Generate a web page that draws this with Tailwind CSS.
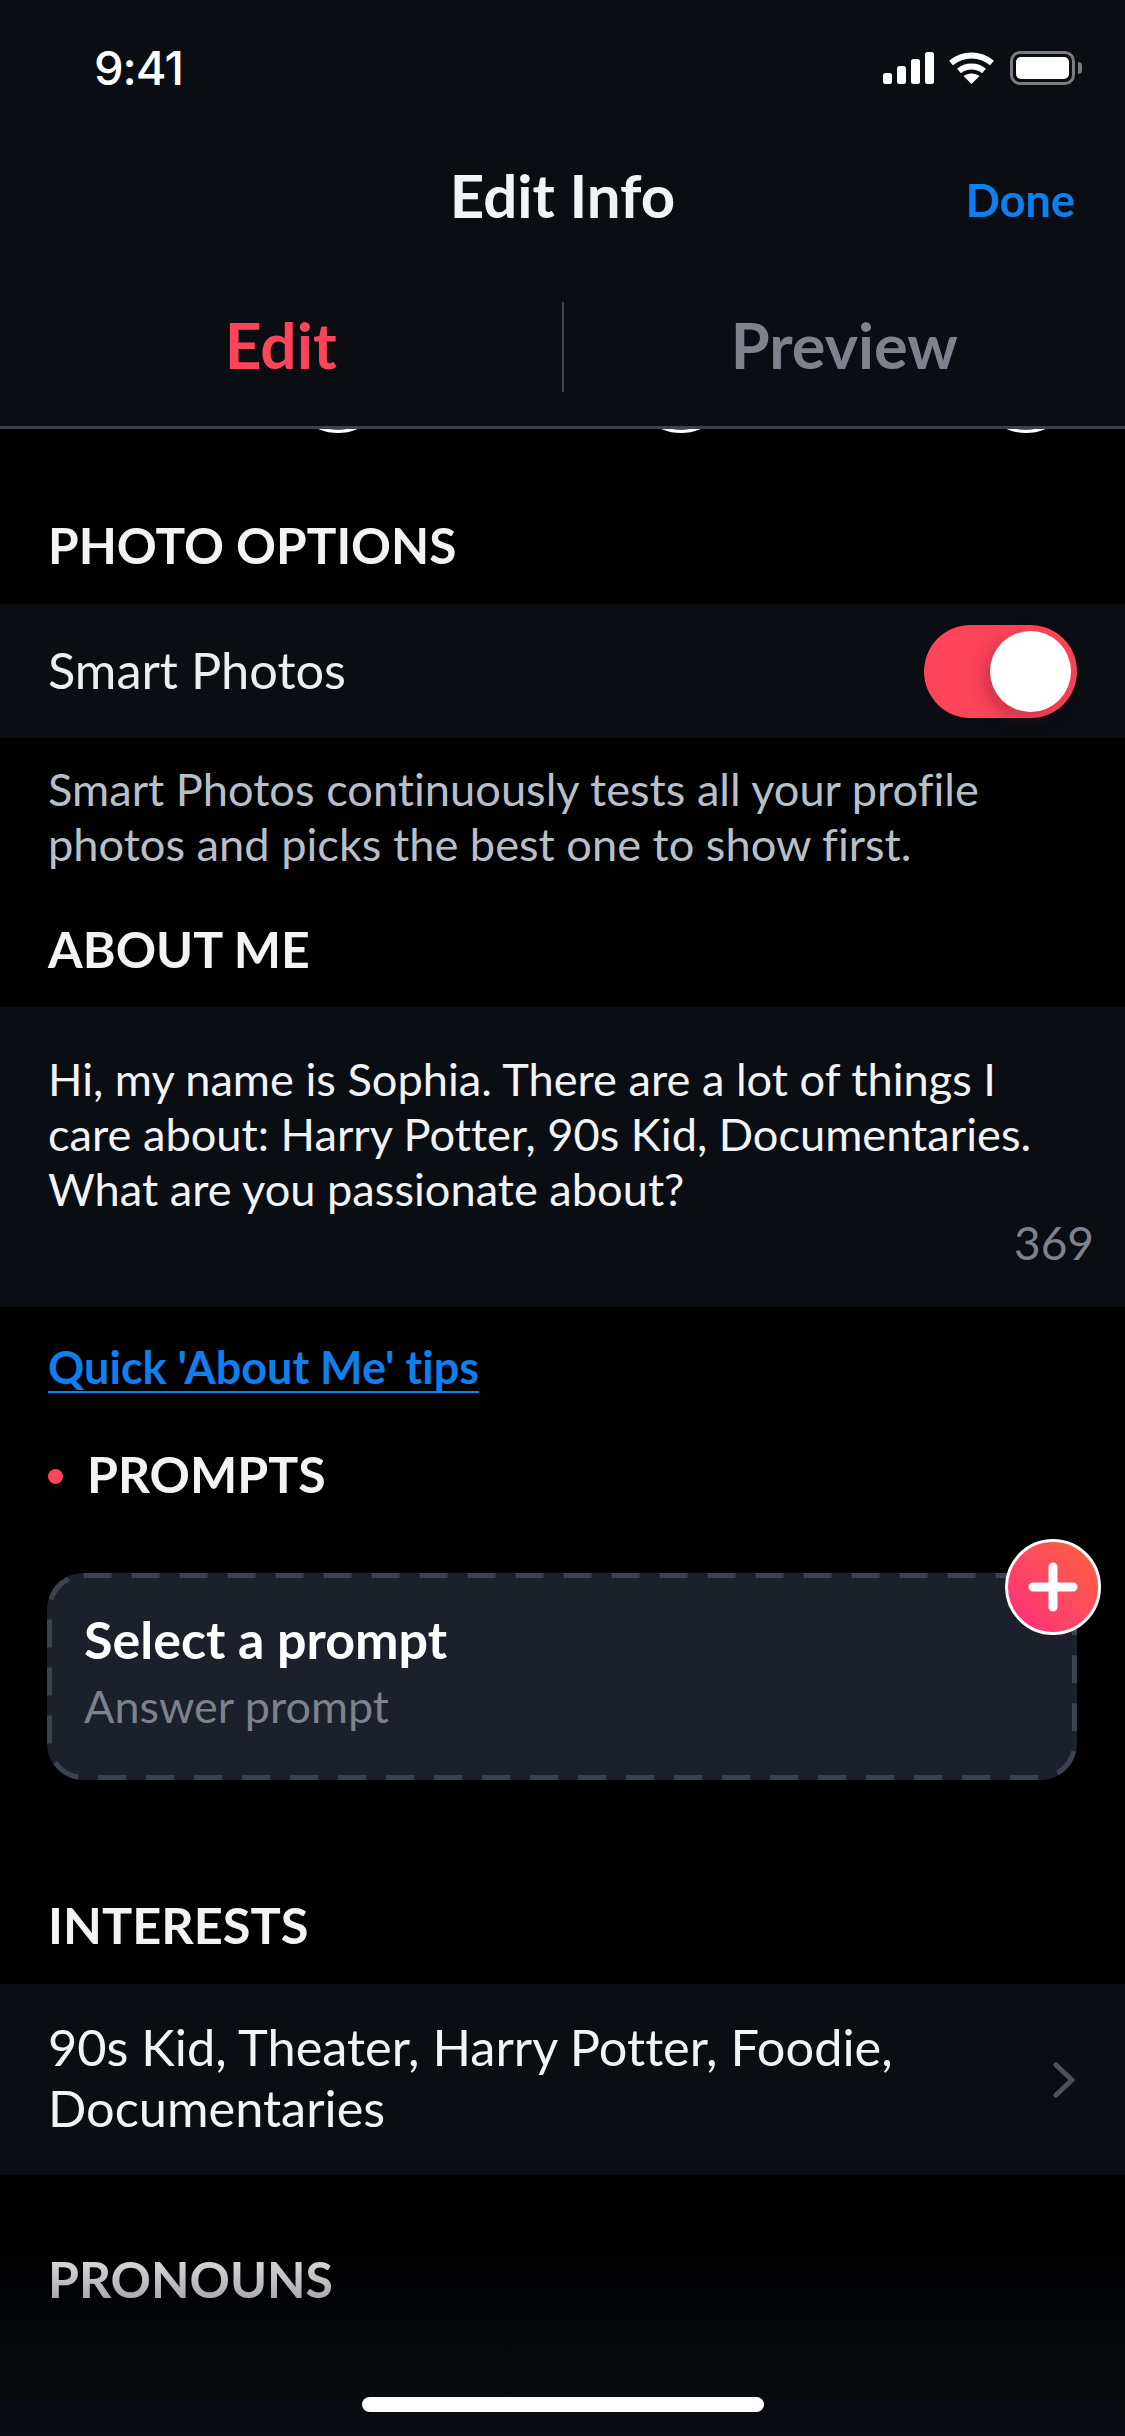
<!DOCTYPE html>
<html lang="en">
<head>
    <meta charset="UTF-8">
    <title>Edit Info</title>
    <meta name="viewport" content="width=device-width, initial-scale=1.0">
    <script src="https://cdn.jsdelivr.net/npm/@tailwindcss/browser@4"></script>
</head>
<body class="relative w-[1125px] h-[2436px] overflow-hidden bg-black text-white font-['Lato','Noto_Sans',sans-serif] [font-variant-ligatures:none]">
    <!-- peeking photo buttons behind the header -->
    <div class="absolute left-[290px] top-[337px] w-[96px] h-[96px] rounded-full border-[3px] border-white bg-[#c2255c]"></div>
    <div class="absolute left-[633px] top-[337px] w-[96px] h-[96px] rounded-full border-[3px] border-white bg-[#c2255c]"></div>
    <div class="absolute left-[978px] top-[337px] w-[96px] h-[96px] rounded-full border-[3px] border-white bg-[#c2255c]"></div>

    <header class="relative h-[429px] bg-[#0a0d12] border-b-[3px] border-[#3c424c]">
        <div class="flex items-center justify-between h-[136px] pl-[94px] pr-[43px]">
            <span class="text-[47px] font-['Inter',sans-serif] font-medium tracking-[-1px]">9:41</span>
            <div class="flex items-center">
                <svg width="51" height="32" viewBox="0 0 51 32" fill="#fff" class="mr-[15px]">
                    <rect x="0" y="21" width="9" height="11" rx="2.5"/>
                    <rect x="14" y="14" width="9" height="18" rx="2.5"/>
                    <rect x="28" y="7" width="9" height="25" rx="2.5"/>
                    <rect x="42" y="0" width="9" height="32" rx="2.5"/>
                </svg>
                <svg width="45" height="32" viewBox="0 0 45 32" fill="none" stroke="#fff" stroke-width="6" class="mr-[16px]">
                    <path d="M2 11 C14 1 31 1 43 11"/>
                    <path d="M10 19 C17 13 28 13 35 19"/>
                    <path d="M22.5 32 L14.5 24 C19 20.5 26 20.5 30.5 24 Z" fill="#fff" stroke="none"/>
                </svg>
                <div class="w-[65px] h-[34px] rounded-[10px] border-[3px] border-[#7a7c80] p-[3px]">
                    <div class="w-full h-full rounded-[5px] bg-white"></div>
                </div>
                <div class="w-[4px] h-[12px] ml-[3px] rounded-r-full bg-[#7a7c80]"></div>
            </div>
        </div>
        <div class="relative flex items-center justify-center h-[122px] pb-[4px]">
            <span class="text-[60px] font-bold text-[#f2f3f5]">Edit Info</span>
            <span class="absolute right-[50px] top-[31px] text-[45px] font-bold text-[#107fee]">Done</span>
        </div>
        <div class="flex items-center h-[90px] mt-[44px]">
            <div class="flex-1 pb-[4px] text-center text-[64px] font-bold text-[#fd4459]">Edit</div>
            <div class="w-[2px] h-[90px] bg-[#3c424c]"></div>
            <div class="flex-1 pb-[4px] text-center text-[63px] font-bold text-[#7d828c]">Preview</div>
        </div>
    </header>

    <main>
        <h2 class="flex items-center h-[114px] mt-[61px] pb-[3px] px-[48px] text-[49.5px] font-bold text-[#f2f3f5]">PHOTO OPTIONS</h2>
        <div class="flex items-center justify-between h-[134px] px-[48px] bg-[#0a0d12]">
            <span class="pb-[3px] text-[50.5px] text-[#eceef0]">Smart Photos</span>
            <div class="relative w-[153px] h-[93px] rounded-full bg-[#fd4459]">
                <div class="absolute right-[6px] top-[6px] w-[81px] h-[81px] rounded-full bg-white shadow-[-6px_6px_16px_rgba(120,20,40,0.35)]"></div>
            </div>
        </div>
        <p class="pt-[23px] px-[48px] text-[45.2px] leading-[55px] text-[#b9bfc8]">Smart Photos continuously tests all your profile<br>photos and picks the best one to show first.</p>
        <h2 class="flex items-center h-[111px] mt-[25px] pb-[4px] px-[48px] text-[50px] font-bold text-[#f2f3f5]">ABOUT ME</h2>
        <div class="h-[300px] pt-[44px] bg-[#0a0d12]">
            <p class="px-[48px] text-[45.2px] leading-[55px] text-[#f2f3f5]">Hi, my name is Sophia. There are a lot of things I<br>care about: Harry Potter, 90s Kid, Documentaries.<br>What are you passionate about?</p>
            <div class="pr-[31px] text-right text-[46px] leading-[54px] text-[#7d828c]">369</div>
        </div>
        <a class="block mt-[33px] px-[48px] text-[45px] leading-[54px] font-bold text-[#107fee] underline decoration-[2px] underline-offset-[7px] [text-decoration-skip-ink:none]">Quick 'About Me' tips</a>
        <div class="flex items-center gap-[24px] h-[54px] mt-[55px] pl-[48px]">
            <span class="w-[15px] h-[15px] rounded-full bg-[#fd4459]"></span>
            <h2 class="pb-[4px] text-[50px] font-bold text-[#f2f3f5]">PROMPTS</h2>
        </div>
        <div class="relative h-[207px] mt-[70px] mx-[47px] w-[1030px] rounded-[36px] bg-[#1b202a] pl-[37px] pt-[37px]">
            <svg class="absolute left-0 top-0" width="1030" height="207" fill="none">
                <rect x="2.5" y="2.5" width="1025" height="202" rx="34" stroke="#3c424f" stroke-width="5" stroke-dasharray="28 20"/>
            </svg>
            <div class="relative text-[52px] leading-[58px] font-bold">Select a prompt</div>
            <div class="relative mt-[10px] text-[45px] leading-[56px] text-[#7d828c]">Answer prompt</div>
            <div class="absolute right-[-24px] top-[-34px] flex items-center justify-center w-[96px] h-[96px] rounded-full border-[3px] border-white bg-gradient-to-tr from-[#fd267d] to-[#ff6036]">
                <svg width="50" height="50" viewBox="0 0 50 50" stroke="#fff" stroke-width="9" stroke-linecap="round">
                    <path d="M25 5 V45 M5 25 H45"/>
                </svg>
            </div>
        </div>
        <h2 class="flex items-center h-[114px] mt-[90px] pb-[4px] px-[48px] text-[50.5px] font-bold text-[#f2f3f5]">INTERESTS</h2>
        <div class="flex items-center justify-between h-[191px] pl-[48px] pr-[50px] bg-[#0a0d12]">
            <p class="pb-[5px] text-[50.5px] leading-[61px] text-[#f2f3f5]">90s Kid, Theater, Harry Potter, Foodie,<br>Documentaries</p>
            <svg width="22" height="36" viewBox="0 0 22 36" fill="none" stroke="#4e525b" stroke-width="5" stroke-linecap="round" stroke-linejoin="round">
                <path d="M3 3 L19 18 L3 33"/>
            </svg>
        </div>
        <h2 class="flex items-center h-[54px] mt-[77px] px-[48px] text-[50px] font-bold text-[#f2f3f5]">PRONOUNS</h2>
    </main>

    <!-- bottom fade and home indicator -->
    <div class="absolute left-0 right-0 bottom-0 h-[200px] bg-gradient-to-b from-transparent to-[#0a0d12]"></div>
    <div class="absolute left-[362px] top-[2397px] w-[402px] h-[15px] rounded-full bg-white"></div>
</body>
</html>
